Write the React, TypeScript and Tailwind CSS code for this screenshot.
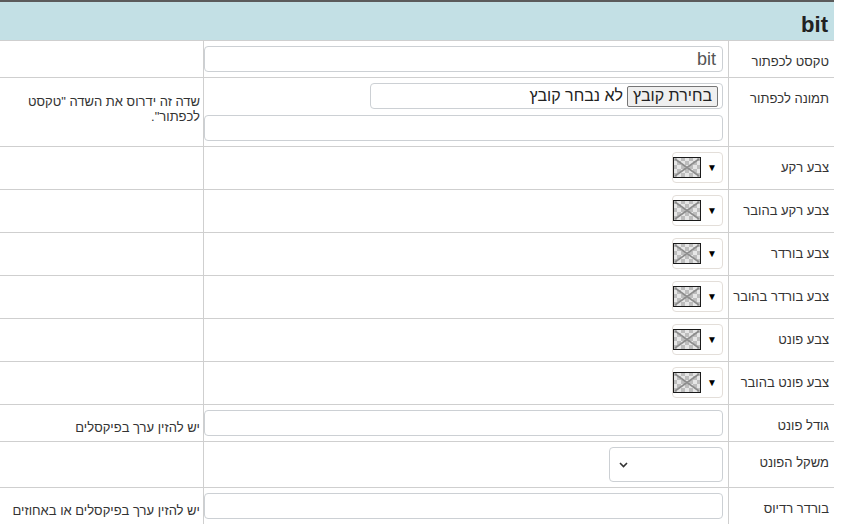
import React from "react";

const font = { fontFamily: '"Liberation Sans", "Noto Sans", Arial, sans-serif' };

// small checkerboard swatch with a cross, like an empty colour
const EmptySwatch = () => (
  <svg width="28" height="21" viewBox="0 0 28 21" className="block">
    <defs>
      <pattern id="chk" width="8" height="8" patternUnits="userSpaceOnUse">
        <rect width="8" height="8" fill="#e6e6e6" />
        <rect width="4" height="4" fill="#bdbdbd" />
        <rect x="4" y="4" width="4" height="4" fill="#bdbdbd" />
      </pattern>
    </defs>
    <rect x="0.5" y="0.5" width="27" height="20" fill="url(#chk)" stroke="#1a1a1a" />
    <line x1="2" y1="2" x2="26" y2="19" stroke="#8c8c8c" strokeWidth="1.6" />
    <line x1="26" y1="2" x2="2" y2="19" stroke="#8c8c8c" strokeWidth="1.6" />
  </svg>
);

const ColorPicker = () => (
  <div className="flex items-center gap-[6px] h-[31px] w-[51px] border border-[#e3ded9] rounded-[4px] bg-white pr-[5px]">
    <span className="text-[10px] text-black leading-none">▼</span>
    <EmptySwatch />
  </div>
);

const TextBox = ({ value = "" }: { value?: string }) => (
  <div className="h-[26px] w-full border border-[#ccd0d4] rounded-[4px] bg-white flex items-center px-[6px] text-[18px] text-[#555]">
    {value}
  </div>
);

type RowProps = {
  label: string;
  h: string;
  hint?: React.ReactNode;
  children?: React.ReactNode;
};

const Row = ({ label, h, hint, children }: RowProps) => (
  <div className={`flex border-b border-[#cfcfcf] ${h}`}>
    <div className="w-[105px] shrink-0 pr-[5px] pt-[13px] text-[13px] leading-[16px] text-[#333]">
      {label}
    </div>
    <div className="w-[526px] shrink-0 border-l border-r border-[#cfcfcf] pr-[5px] pt-[5px]">
      {children}
    </div>
    <div className="flex-1 pr-[3px] text-[13px] leading-[15px] text-[#333]">{hint}</div>
  </div>
);

export default function App() {
  const colorRows = [
    "צבע רקע",
    "צבע רקע בהובר",
    "צבע בורדר",
    "צבע בורדר בהובר",
    "צבע פונט",
    "צבע פונט בהובר",
  ];

  return (
    <div className="w-[844px] h-[524px] overflow-hidden bg-white" style={font}>
      <div dir="rtl" className="w-[834px] border-t-2 border-[#5b5b5b]">
        <div className="h-[39px] bg-[#c3e0e5] border-b border-[#cfcfcf] flex items-center pr-[6px]">
          <span className="text-[22px] font-bold text-[#222] pt-[6px]">bit</span>
        </div>

        <Row label="טקסט לכפתור" h="h-[37px]">
          <TextBox value="bit" />
        </Row>

        <Row
          label="תמונה לכפתור"
          h="h-[69px]"
          hint={
            <div className="pt-[16px]">
              שדה זה ידרוס את השדה "טקסט
              <br />
              לכפתור".
            </div>
          }
        >
          <div className="flex flex-col gap-[6px]">
            <div className="h-[26px] w-[353px] border border-[#ccd0d4] rounded-[4px] flex items-center pr-[4px] gap-[4px] text-[16px] text-[#222]">
              <span className="h-[21px] px-[5px] flex items-center bg-[#efefef] border border-[#767676] rounded-[2px]">
                בחירת קובץ
              </span>
              <span>לא נבחר קובץ</span>
            </div>
            <TextBox />
          </div>
        </Row>

        {colorRows.map((l) => (
          <Row key={l} label={l} h="h-[43px]">
            <ColorPicker />
          </Row>
        ))}

        <Row
          label="גודל פונט"
          h="h-[37px]"
          hint={<div className="pt-[15px]">יש להזין ערך בפיקסלים</div>}
        >
          <TextBox />
        </Row>

        <Row label="משקל הפונט" h="h-[46px]">
          <div className="h-[35px] w-[114px] border border-[#ccd0d4] rounded-[4px] flex items-center justify-end pl-[9px]">
            <svg width="9" height="6" viewBox="0 0 9 6">
              <path d="M1 1 L4.5 4.5 L8 1" fill="none" stroke="#333" strokeWidth="1.6" />
            </svg>
          </div>
        </Row>

        <Row
          label="בורדר רדיוס"
          h="h-[40px]"
          hint={<div className="pt-[15px]">יש להזין ערך בפיקסלים או באחוזים</div>}
        >
          <TextBox />
        </Row>
      </div>
    </div>
  );
}
